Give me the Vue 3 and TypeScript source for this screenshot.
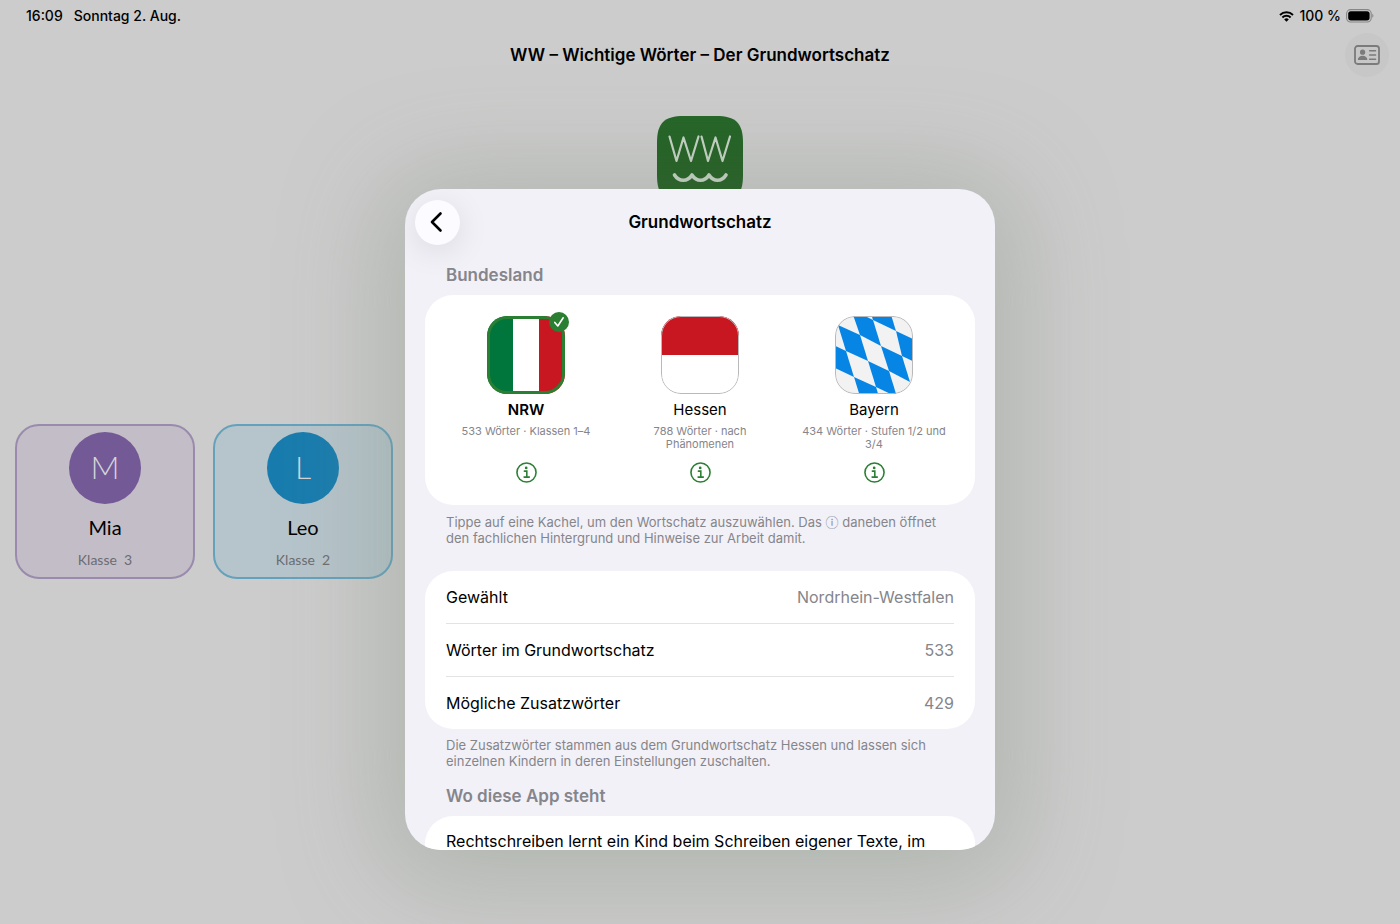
<script setup lang="ts">
import { ref, computed } from 'vue'

type Flag = 'nrw' | 'hessen' | 'bayern'
interface Child { name: string; grade: string; tone: string }
interface State { id: Flag; short: string; full: string; note: string; words: number; extra: number }

const children: Child[] = [
  { name: 'Mia', grade: 'Klasse  3', tone: 'purple' },
  { name: 'Leo', grade: 'Klasse  2', tone: 'blue' },
]

const states: State[] = [
  { id: 'nrw', short: 'NRW', full: 'Nordrhein-Westfalen', note: '533 Wörter · Klassen 1–4', words: 533, extra: 429 },
  { id: 'hessen', short: 'Hessen', full: 'Hessen', note: '788 Wörter · nach Phänomenen', words: 788, extra: 0 },
  { id: 'bayern', short: 'Bayern', full: 'Bayern', note: '434 Wörter · Stufen 1/2 und 3/4', words: 434, extra: 0 },
]

const selected = ref<Flag>('nrw')
const current = computed(() => states.find((s) => s.id === selected.value)!)
const rows = computed(() => [
  { label: 'Gewählt', value: current.value.full },
  { label: 'Wörter im Grundwortschatz', value: String(current.value.words) },
  { label: 'Mögliche Zusatzwörter', value: String(current.value.extra) },
])
</script>

<template>
  <div class="screen">
    <div class="status">
      <div class="status-left"><span>16:09</span><span>Sonntag 2. Aug.</span></div>
      <div class="status-right">
        <svg class="wifi" viewBox="0 0 16 12" aria-hidden="true">
          <path d="M.9 4.300a10.200 10.200 0 0 1 14.200 0M3.500 7.100a6.400 6.400 0 0 1 9 0" fill="none" stroke="#000" stroke-width="2.100" />
          <path d="M8 11.800 5.500 9.300a3.500 3.500 0 0 1 5 0z" />
        </svg>
        <span>100 %</span>
        <svg class="battery" viewBox="0 0 28 14" aria-hidden="true">
          <rect x="0.6" y="0.6" width="24.6" height="12.4" rx="4" fill="none" stroke="#868686" stroke-width="1.1" />
          <rect x="2.2" y="2.2" width="21.4" height="9.2" rx="2.6" />
          <path d="M26.3 4.8c1.5.6 1.5 3.4 0 4z" fill="#868686" />
        </svg>
      </div>
    </div>

    <header class="bar">
      <h1>WW – Wichtige Wörter – Der Grundwortschatz</h1>
      <button class="contact" type="button" aria-label="Profil">
        <svg viewBox="0 0 26 20" aria-hidden="true">
          <rect x="1" y="1" width="24" height="18" rx="2.6" fill="none" stroke="#7b7b7b" stroke-width="1.8" />
          <circle cx="8.6" cy="7.2" r="2.6" fill="#7b7b7b" />
          <path d="M3.800 15c0-2.600 2-4.200 4.800-4.200s4.800 1.600 4.800 4.200z" fill="#7b7b7b" />
          <path d="M15.600 5.800h6M15.600 10h6M15.600 14.300h6" stroke="#7b7b7b" stroke-width="1.400" stroke-linecap="round" />
        </svg>
      </button>
    </header>

    <svg class="logo" viewBox="0 0 86 86" aria-hidden="true">
      <defs>
        <linearGradient id="logo-fill" x1="0" y1="0" x2="0" y2="1">
          <stop offset="0" stop-color="#236526" />
          <stop offset="1" stop-color="#145414" />
        </linearGradient>
      </defs>
      <path d="M0 27C0 7 7 0 27 0h32c20 0 27 7 27 27v32c0 20-7 27-27 27H27C7 86 0 79 0 59z" fill="url(#logo-fill)" />
      <g fill="none" stroke="#c6d4c6" stroke-linecap="round" stroke-linejoin="round">
        <path d="M12.500 20.500 19.500 45 26.500 21.500 34 45 41.500 20.500M44.500 20.500 51 45 58.500 21.500 65.500 45 73 20.500" stroke-width="2.200" />
        <path d="M17.500 59c4.500 7 13 7 17.500 0 4.500 7 12.500 7 17 0 4.500 7 12.500 7 17 0" stroke-width="3.600" />
      </g>
    </svg>

    <main class="children">
      <button v-for="c in children" :key="c.name" type="button" class="child" :class="c.tone">
        <span class="avatar">{{ c.name[0] }}</span>
        <span class="name">{{ c.name }}</span>
        <span class="grade">{{ c.grade }}</span>
      </button>
    </main>

    <div class="overlay">
      <section class="sheet" role="dialog" aria-label="Grundwortschatz">
        <div class="sheet-head">
          <button class="back" type="button" aria-label="Zurück">
            <svg viewBox="0 0 14 22" aria-hidden="true">
              <path d="M11.500 2.500 3 11l8.500 8.500" fill="none" stroke="#000" stroke-width="2.600" stroke-linecap="round" stroke-linejoin="round" />
            </svg>
          </button>
          <h2>Grundwortschatz</h2>
        </div>

        <h3>Bundesland</h3>
        <div class="card tiles">
          <div v-for="s in states" :key="s.id" class="tile">
            <button type="button" class="pick" :class="{ on: selected === s.id }" :aria-pressed="selected === s.id" @click="selected = s.id">
              <span class="flag" :class="s.id">
                <svg v-if="s.id === 'nrw'" viewBox="0 0 78 78" aria-hidden="true">
                  <path fill="#00763c" d="M0 0h26v78H0z" /><path fill="#fff" d="M26 0h26v78H26z" /><path fill="#c81720" d="M52 0h26v78H52z" />
                </svg>
                <svg v-else-if="s.id === 'hessen'" viewBox="0 0 78 78" aria-hidden="true">
                  <path fill="#fff" d="M0 0h78v78H0z" /><path fill="#c81720" d="M0 0h78v39H0z" />
                </svg>
                <svg v-else viewBox="0 0 78 78" aria-hidden="true">
                  <path fill="#f2f2f3" d="M0 0h78v78H0z" />
                  <g fill="#0785e4">
                    <path d="M16-7 38 4 46 30 25 19z" />
                    <path d="M30-22 53-11 61 15 38 4z" />
                    <path d="M3 9 25 19 33 45 11 35z" />
                    <path d="M46 30 67 40 75 66 54 55z" />
                    <path d="M61 15 82 25 90 51 67 40z" />
                    <path d="M-10 25 11 35 19 61-2 51z" />
                    <path d="M33 45 54 55 62 81 41 71z" />
                    <path d="M19 61 41 71 49 97 27 87z" />
                    <path d="M-2 51-2 61 5 80-16 76z" />
                  </g>
                </svg>
              </span>
              <span v-if="selected === s.id" class="check">
                <svg viewBox="0 0 20 20" aria-hidden="true">
                  <path d="M5.800 10.400 8.800 14 14.200 5.800" fill="none" stroke="#fff" stroke-width="1.600" stroke-linecap="round" stroke-linejoin="round" />
                </svg>
              </span>
              <span class="tile-name">{{ s.short }}</span>
              <span class="tile-note">{{ s.note }}</span>
            </button>
            <button type="button" class="info" :aria-label="'Hintergrund ' + s.short">
              <svg viewBox="0 0 20 20" aria-hidden="true">
                <circle cx="10" cy="10" r="9.100" fill="none" stroke="#2a7f32" stroke-width="1.500" />
                <circle cx="9.700" cy="5.600" r="1.300" fill="#2a7f32" />
                <path d="M8 8.700h2.300v5.500M7.700 14.400h5" fill="none" stroke="#2a7f32" stroke-width="1.500" stroke-linecap="round" />
              </svg>
            </button>
          </div>
        </div>
        <p class="hint">Tippe auf eine Kachel, um den Wortschatz auszuwählen. Das ⓘ daneben öffnet den fachlichen Hintergrund und Hinweise zur Arbeit damit.</p>

        <dl class="card rows">
          <div v-for="r in rows" :key="r.label" class="row">
            <dt>{{ r.label }}</dt>
            <dd>{{ r.value }}</dd>
          </div>
        </dl>
        <p class="hint">Die Zusatzwörter stammen aus dem Grundwortschatz Hessen und lassen sich einzelnen Kindern in deren Einstellungen zuschalten.</p>

        <h3 class="second">Wo diese App steht</h3>
        <div class="card about">Rechtschreiben lernt ein Kind beim Schreiben eigener Texte, im</div>
      </section>
    </div>
  </div>
</template>

<style>
body { margin: 0; background: #cccccc; }
</style>

<style scoped>
* { box-sizing: border-box; }
.screen {
  position: relative;
  min-height: 100vh;
  overflow: hidden;
  display: flex;
  flex-direction: column;
  background: #cccccc;
  color: #000;
  font-family: Inter, "Liberation Sans", "Noto Sans CJK JP", sans-serif;
}
button { border: 0; padding: 0; background: none; font: inherit; color: inherit; cursor: pointer; }
h1, h2, h3, p, dl, dd { margin: 0; }
svg { display: block; }
.status {
  display: flex;
  justify-content: space-between;
  align-items: center;
  height: 32px;
  padding: 0 26px;
  font-size: 14px;
  line-height: 18px;
  font-weight: 500;
}
.status-left { display: flex; gap: 11px; }
.status-right { display: flex; align-items: center; gap: 5px; }
.wifi { width: 15px; height: 11px; }
.battery { width: 28px; height: 14px; }
.bar {
  display: grid;
  grid-template-columns: 1fr auto 1fr;
  align-items: center;
  height: 46px;
  padding: 0 11px;
}
.bar h1 { grid-column: 2; font-size: 17px; font-weight: 600; }
.contact {
  justify-self: end;
  display: grid;
  place-items: center;
  width: 44px;
  height: 44px;
  border-radius: 50%;
  background: #c7c7c7;
}
.contact svg { width: 26px; height: 20px; }
.logo { width: 86px; height: 86px; margin: 38px auto 0; }
.children {
  display: grid;
  grid-template-columns: repeat(auto-fill, 180px);
  gap: 18px;
  margin-top: 222px;
  padding: 0 15px;
  font-family: Lato, sans-serif;
}
.child {
  display: flex;
  flex-direction: column;
  align-items: center;
  height: 155px;
  padding-top: 6px;
  border: 2px solid;
  border-radius: 24px;
}
.purple { background: #c2bdc6; border-color: #9a8bae; }
.blue { background: #b6c4cb; border-color: #64a2bc; }
.avatar {
  display: grid;
  place-items: center;
  width: 72px;
  height: 72px;
  padding-bottom: 4px;
  border-radius: 50%;
  color: #d5d5d8;
  font-size: 32px;
  font-weight: 300;
}
.purple .avatar { background: #735995; }
.blue .avatar { background: #187cae; }
.name { margin-top: 11px; font-size: 20px; line-height: 24px; }
.grade { margin-top: 11px; font-size: 14px; line-height: 20px; color: #6c6c72; white-space: pre; }
.overlay {
  position: absolute;
  inset: 0;
  display: flex;
  justify-content: center;
  align-items: flex-start;
  padding-top: 189px;
}
.sheet {
  width: 590px;
  max-width: 100%;
  height: calc(100vh - 263px);
  overflow: hidden;
  padding: 0 20px;
  border-radius: 36px;
  background: #f2f1f7;
  box-shadow: 0 10px 100px 24px rgba(128, 140, 122, 0.36);
}
.sheet-head {
  display: grid;
  grid-template-columns: 1fr auto 1fr;
  align-items: center;
  height: 66px;
  margin: 0 -10px;
}
.back {
  display: grid;
  place-items: center;
  width: 45px;
  height: 45px;
  border-radius: 50%;
  background: #fcfbff;
  box-shadow: 0 6px 32px rgba(0, 0, 0, 0.1);
}
.back svg { width: 14px; height: 22px; margin-right: 4px; }
h2 { font-size: 17px; line-height: 22px; font-weight: 600; }
h3 {
  padding: 9px 21px;
  font-size: 17px;
  line-height: 22px;
  font-weight: 600;
  color: #85858b;
}
.card { border-radius: 28px; background: #fff; }
.tiles {
  display: grid;
  grid-template-columns: repeat(3, 1fr);
  gap: 12px;
  height: 210px;
  padding: 21px 20px 0;
}
.tile { display: flex; flex-direction: column; align-items: center; }
.pick {
  position: relative;
  display: flex;
  flex-direction: column;
  align-items: center;
  width: 100%;
  height: 136px;
}
.flag {
  position: relative;
  width: 78px;
  height: 78px;
  overflow: hidden;
  border-radius: 20px;
}
.flag::after {
  content: "";
  position: absolute;
  inset: 0;
  border: 1px solid #b9b9bb;
  border-radius: 20px;
}
.on .flag::after { border: 3px solid #2a7f32; }
.flag svg { width: 78px; height: 78px; }
.check {
  position: absolute;
  top: -4px;
  left: calc(50% + 23px);
  width: 20px;
  height: 20px;
  border-radius: 50%;
  background: #2a7f32;
}
.tile-name { margin-top: 6px; font-size: 15px; line-height: 20px; }
.on .tile-name { font-weight: 600; }
.tile-note { margin-top: 5px; font-size: 11px; line-height: 13px; color: #85858b; }
.info { margin-top: 10px; }
.info svg { width: 21px; height: 21px; }
.hint {
  padding: 9px 21px 0;
  font-size: 13px;
  line-height: 16px;
  color: #85858b;
}
.rows { margin-top: 25px; padding: 0 21px; }
.row {
  display: flex;
  justify-content: space-between;
  align-items: center;
  height: 53px;
  border-bottom: 1px solid #e3e3e6;
  font-size: 16px;
}
.row:last-child { height: 52px; border-bottom: 0; }
dd { color: #85858b; }
.rows + .hint { padding-top: 8px; }
.second { padding-top: 16px; }
.about { padding: 14px 21px 60px; font-size: 16px; line-height: 22px; white-space: nowrap; }
</style>
